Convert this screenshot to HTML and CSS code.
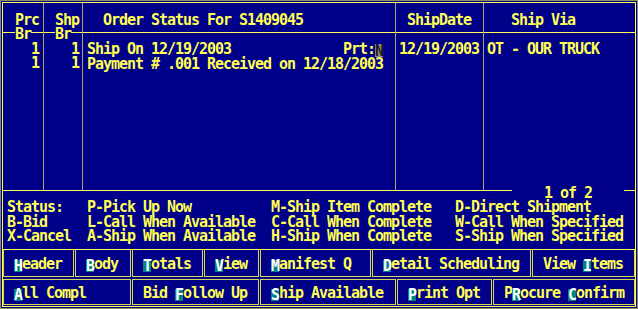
FILE: index.html
```html
<!DOCTYPE html>
<html lang="en">
<head>
    <meta charset="UTF-8">
    <meta name="viewport" content="width=device-width, initial-scale=1.0">
    <title>Order Status For S1409045</title>
    <link rel="stylesheet" href="styles.css">
</head>
<body>
    <div class="screen">
        <div class="frame">
            <div class="table">
                <div class="cell head c1"> Prc
 <span class="ink">Br</span></div>
                <div class="cell head c2"> Shp
 <span class="ink">Br</span></div>
                <div class="cell head c3">  Order Status For S1409045</div>
                <div class="cell head c4"> ShipDate</div>
                <div class="cell head c5">   Ship Via</div>

                <div class="cell c1">   1
   1</div>
                <div class="cell c2">   1
   1</div>
                <div class="cell c3">Ship On 12/19/2003              Prt:<span class="field">N</span>
Payment # .001 Received on 12/18/2003</div>
                <div class="cell c4">12/19/2003</div>
                <div class="cell c5">OT - OUR TRUCK</div>
            </div>

            <div class="pager"><span class="ink">    1 of 2    </span></div>

            <div class="legend">Status:   P-Pick Up Now          M-Ship Item Complete   D-Direct Shipment
B-Bid     L-Call When Available  C-Call When Complete   W-Call When Specified
X-Cancel  A-Ship When Available  H-Ship When Complete   S-Ship When Specified</div>

            <div class="keys top">
                <div class="key"><span class="hot">H</span>eader</div>
                <div class="key"><span class="hot">B</span>ody</div>
                <div class="key"><span class="hot">T</span>otals</div>
                <div class="key"><span class="hot">V</span>iew</div>
                <div class="key"><span class="hot">M</span>anifest Q</div>
                <div class="key"><span class="hot">D</span>etail Scheduling</div>
                <div class="key">View <span class="hot">I</span>tems</div>
            </div>
            <div class="keys bottom">
                <div class="key"><span class="hot">A</span>ll Compl</div>
                <div class="key">Bid <span class="hot">F</span>ollow Up</div>
                <div class="key"><span class="hot">S</span>hip Available</div>
                <div class="key"><span class="hot">P</span>rint Opt</div>
                <div class="key">P<span class="hot">R</span>ocure <span class="hot">C</span>onfirm</div>
            </div>
        </div>
    </div>
</body>
</html>
```

FILE: styles.css
```css
body {
    margin: 0;
    background-color: #000088;
    color: #ffff54;
    font-family: "DejaVu Sans Mono", monospace;
    font-size: 15px;
    font-weight: bold;
    letter-spacing: -1.03px;
    line-height: 14.4px;
}
.screen {
    width: 638px;
    height: 309px;
    box-sizing: border-box;
    border: 1px solid #8c8c5c;
    padding: 1px;
}
.frame {
    height: 100%;
    box-sizing: border-box;
    border: 1px solid #ffff54;
}
.ink {
    background-color: #000088;
}

/* order lines */
.table {
    display: grid;
    grid-template-columns: 41px 39px 313px 88px 1fr;
    grid-template-rows: 37.8px 1fr;
    height: 188px;
    box-sizing: border-box;
    border-bottom: 1px solid #ffff54;
}
.cell {
    white-space: pre;
    border-right: 1px solid #a8a860;
    padding-top: 1px;
    padding-left: 3px;
}
.cell.c1,
.cell.c3 {
    padding-left: 4px;
}
.cell.c5 {
    border-right: none;
}
.head {
    padding-top: 10px;
    box-sizing: border-box;
    background: linear-gradient(to bottom, transparent 29px, #ffff54 29px, #ffff54 30px, transparent 30px);
}
.field {
    display: inline-block;
    width: 8px;
    height: 13px;
    line-height: 14px;
    vertical-align: -2px;
    letter-spacing: 0;
    background-color: #8c8c8c;
    color: #1c1c1c;
}

/* page counter sits on the line */
.pager {
    display: flex;
    justify-content: flex-end;
    margin: -5px 11px 0 0;
    white-space: pre;
}

.legend {
    white-space: pre;
    padding: 0 0 5px 4px;
    border-bottom: 1px solid #ffff54;
}

/* function keys */
.keys {
    display: grid;
    gap: 1px;
}
.keys.top {
    grid-template-columns: 71px 56px 71px 55px 111px 159px 1fr;
}
.keys.bottom {
    grid-template-columns: 128px 127px 136px 95px 1fr;
    margin-top: 2px;
}
.key {
    box-sizing: border-box;
    white-space: pre;
    padding-left: 10px;
    border: 1px solid #d8d850;
}
.keys.top .key {
    border-top: none;
    height: 27px;
    padding-top: 7px;
}
.keys.bottom .key {
    height: 26px;
    padding-top: 6px;
}
.hot {
    display: inline-block;
    width: 8px;
    height: 12px;
    line-height: 13px;
    vertical-align: -2px;
    letter-spacing: 0;
    background-color: #008484;
    color: #ffffff;
}
```
